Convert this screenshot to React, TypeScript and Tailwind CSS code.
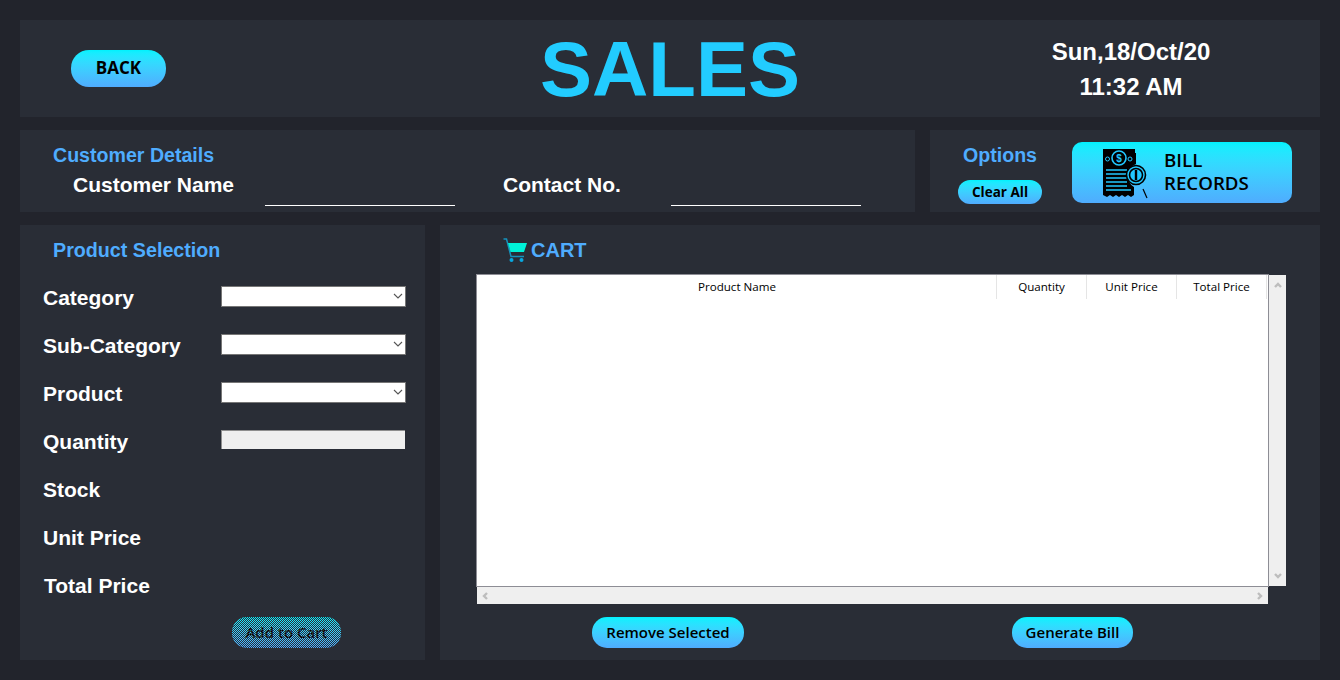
const FIELDS = ["Category", "Sub-Category", "Product", "Quantity", "Stock", "Unit Price", "Total Price"];

function BillIcon() {
  return (
    <svg width="46" height="50" viewBox="0 0 46 50" className="mt-[2px] shrink-0">
      <path d="M0 0H32V4H33V15A13 13 0 0 0 31 38V46L28 48L25 46L22 48L19 46L16 48L13 46L10 48L7 46L4 48L0 46Z" fill="#000" />
      <circle cx="16" cy="9" r="7" fill="none" stroke="#22c8ff" strokeWidth="1.6" />
      <text x="16" y="13" textAnchor="middle" fontSize="10" fontWeight="700" fill="#22c8ff" fontFamily="Liberation Sans, sans-serif">$</text>
      <circle cx="4.5" cy="10" r="2" fill="none" stroke="#22c8ff" strokeWidth="1" />
      <circle cx="27" cy="10" r="2" fill="none" stroke="#22c8ff" strokeWidth="1" />
      <path d="M3 21H24M3 25H24M3 29H24M3 33H24M3 37H24M3 41H28" stroke="#22c8ff" strokeWidth="1.7" />
      <circle cx="33" cy="26" r="9.5" fill="#22c8ff" stroke="#000" strokeWidth="1.6" />
      <circle cx="33" cy="26" r="6.5" fill="none" stroke="#000" strokeWidth="1.6" />
      <path d="M33 21V31" stroke="#000" strokeWidth="2.4" />
      <path d="M40 40L44 49" stroke="#000" strokeWidth="1.2" />
    </svg>
  );
}

function CartIcon() {
  return (
    <svg width="24" height="24" viewBox="0 0 24 24" className="shrink-0">
      <path d="M0.5 1H3.5L8 18.5H21" fill="none" stroke="#1592bd" strokeWidth="1.5" />
      <path d="M5 5H24L21 14H7.5Z" fill="#00f2d8" />
      <circle cx="8.5" cy="22" r="2" fill="#08a8e0" />
      <circle cx="18.5" cy="22" r="2" fill="#08a8e0" />
    </svg>
  );
}

function SelectBox() {
  return (
    <div className="flex h-[21px] w-[185px] items-center justify-end border border-[#767676] bg-white pr-[2px]">
      <svg width="10" height="6" viewBox="0 0 10 6">
        <path d="M1 1L5 5L9 1" fill="none" stroke="#555" strokeWidth="1.1" />
      </svg>
    </div>
  );
}

function Arrow({ d }: { d: string }) {
  return (
    <svg width="8" height="8" viewBox="0 0 8 8">
      <path d={d} fill="none" stroke="#bdbdbd" strokeWidth="2.4" />
    </svg>
  );
}

export default function App() {
  return (
    <div className="flex h-[680px] w-[1340px] flex-col gap-[13px] overflow-hidden bg-[#22242c] p-[20px] font-['Liberation_Sans',sans-serif]">
      {/* header */}
      <div className="grid h-[97px] shrink-0 grid-cols-[1fr_auto_1fr] items-center bg-[#292d36]">
        <div className="pl-[51px]">
          <button className="mt-[-1px] h-[37px] w-[95px] rounded-[18px] bg-gradient-to-b from-[#00f2fe] to-[#4facfe] font-['Open_Sans',sans-serif] text-[17px] font-bold text-black">
            BACK
          </button>
        </div>
        <h1 className="text-[78px] leading-none font-bold text-[#22ccff]">SALES</h1>
        <div className="pl-[202px] text-center text-[24px] leading-[35px] font-bold text-white">
          <div className="w-[258px]">Sun,18/Oct/20</div>
          <div className="w-[258px]">11:32 AM</div>
        </div>
      </div>

      {/* customer + options */}
      <div className="flex h-[82px] shrink-0 gap-[15px]">
        <div className="w-[895px] bg-[#292d36] pt-[14px] pl-[33px]">
          <h2 className="text-[19.6px] leading-[23px] font-bold text-[#4facfe]">Customer Details</h2>
          <div className="mt-[2px] flex h-[37px] pl-[20px] text-[21px] font-bold text-white">
            <span className="w-[192px] leading-[32px]">Customer Name</span>
            <span className="mt-[36px] h-px w-[190px] bg-white" />
            <span className="ml-[48px] w-[168px] leading-[32px]">Contact No.</span>
            <span className="mt-[36px] h-px w-[190px] bg-white" />
          </div>
        </div>
        <div className="flex flex-1 bg-[#292d36] pt-[12px] pl-[28px]">
          <div className="flex w-[114px] flex-col items-start">
            <h2 className="ml-[5px] text-[19.6px] leading-[27px] font-bold text-[#4facfe]">Options</h2>
            <button className="mt-[11px] h-[24px] w-[84px] rounded-[12px] bg-gradient-to-b from-[#00f2fe] to-[#4facfe] font-['Open_Sans',sans-serif] text-[13.5px] font-bold text-black">
              Clear All
            </button>
          </div>
          <button className="flex h-[61px] w-[220px] items-center rounded-[10px] bg-gradient-to-b from-[#00f2fe] to-[#4facfe] pl-[31px] text-left font-['Open_Sans',sans-serif] text-[18.7px] leading-[23px] font-semibold text-black">
            <BillIcon />
            <span className="mt-[-4px] ml-[15px]">
              BILL
              <br />
              RECORDS
            </span>
          </button>
        </div>
      </div>

      {/* product + cart */}
      <div className="flex h-[435px] shrink-0 gap-[15px]">
        <div className="w-[405px] bg-[#292d36] pt-[13px] pl-[23px]">
          <h2 className="pl-[10px] text-[19.7px] leading-[24px] font-bold text-[#4facfe]">Product Selection</h2>
          <div className="mt-[21px] flex flex-col gap-[18px]">
            {FIELDS.map((f, i) => (
              <div key={f} className="flex h-[30px] items-center text-[21px] font-bold text-white">
                <span className={i === 6 ? "w-[178px] pl-px" : "w-[178px]"}>{f}</span>
                {i < 3 && <div className="mb-[4px]"><SelectBox /></div>}
                {i === 3 && (
                  <div className="mb-[6px] h-[19px] w-[184px] border-t border-l border-[#8e8e8e] bg-[#efefef]" />
                )}
              </div>
            ))}
          </div>
          <div className="mt-[16px] pl-[189px]">
            <button className="relative h-[31px] w-[109px] overflow-hidden rounded-[15px] bg-gradient-to-b from-[#00f2fe] to-[#4facfe] font-['Open_Sans',sans-serif] text-[15px] font-semibold text-black">
              Add to Cart
              {/* disabled look: checker of panel colour laid over the button */}
              <svg width="109" height="31" className="absolute top-0 left-0">
                <defs>
                  <pattern id="dither" width="2" height="2" patternUnits="userSpaceOnUse">
                    <rect x="0" y="0" width="1" height="1" fill="#292d36" />
                    <rect x="1" y="1" width="1" height="1" fill="#292d36" />
                  </pattern>
                </defs>
                <rect width="109" height="31" fill="url(#dither)" shapeRendering="crispEdges" />
              </svg>
            </button>
          </div>
        </div>

        <div className="flex-1 bg-[#292d36] pl-[36px]">
          <div className="flex h-[50px] items-center pl-[27px]">
            <CartIcon />
            <span className="ml-[4px] text-[20px] font-bold text-[#4facfe]">CART</span>
          </div>
          <div className="flex h-[311px] w-[810px]">
            <div className="mt-[-1px] h-[313px] w-[793px] border border-[#8d8d95] bg-white font-['Open_Sans',sans-serif] text-[11.6px] text-black">
              <div className="flex h-[24px] leading-[23px]">
                <div className="w-[519px] pl-px text-center">Product Name</div>
                <div className="w-[90px] border-l border-[#e5e5e5] text-center">Quantity</div>
                <div className="w-[90px] border-l border-[#e5e5e5] text-center">Unit Price</div>
                <div className="w-[91px] border-x border-[#e5e5e5] text-center">Total Price</div>
              </div>
            </div>
            <div className="flex w-[17px] flex-col items-center justify-between bg-[#efefef] py-[6px]">
              <Arrow d="M1 6L4 3L7 6" />
              <Arrow d="M1 2L4 5L7 2" />
            </div>
          </div>
          <div className="mt-px ml-px flex h-[17px] w-[791px] items-center justify-between bg-[#efefef] px-[4px]">
            <Arrow d="M6 1L3 4L6 7" />
            <Arrow d="M2 1L5 4L2 7" />
          </div>
          <div className="mt-[13px] flex">
            <button className="ml-[116px] h-[31px] w-[152px] rounded-[15px] bg-gradient-to-b from-[#00f2fe] to-[#4facfe] font-['Open_Sans',sans-serif] text-[15px] font-semibold text-black">
              Remove Selected
            </button>
            <button className="ml-[268px] h-[31px] w-[121px] rounded-[15px] bg-gradient-to-b from-[#00f2fe] to-[#4facfe] font-['Open_Sans',sans-serif] text-[15px] font-semibold text-black">
              Generate Bill
            </button>
          </div>
        </div>
      </div>
    </div>
  );
}
